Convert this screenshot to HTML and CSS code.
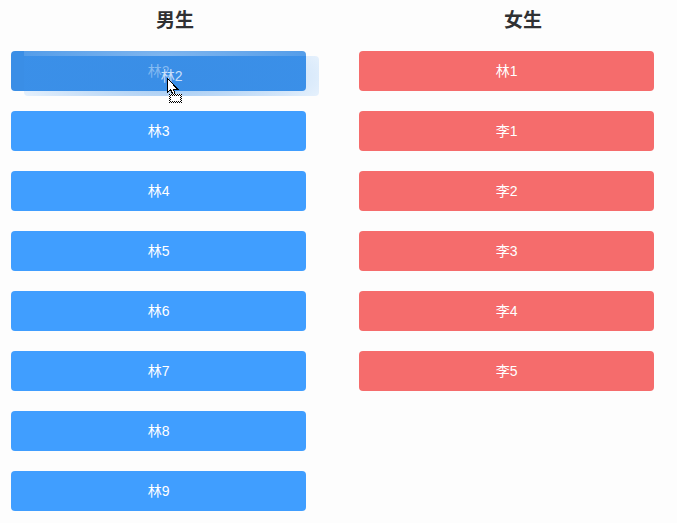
FILE: index.html
```html
<!DOCTYPE html>
<html lang="zh-CN">
<head>
<meta charset="utf-8">
<meta name="viewport" content="width=device-width, initial-scale=1">
<title>男生 / 女生</title>
<link rel="stylesheet" href="styles.css">
</head>
<body>
<main class="board">
  <section class="group">
    <h2 class="title">男生</h2>
    <div class="item-wrap">
      <button class="item boy active" type="button">林2</button>
      <div class="ghost" aria-hidden="true">林2</div>
      <svg class="cursor" viewBox="0 0 16 26" width="16" height="26" shape-rendering="crispEdges" aria-hidden="true">
        <path d="M.5 .5v14l3-3 3 6h2l-2-6h4.500z" fill="#fff" stroke="#000"/>
        <rect x="2" y="16" width="13" height="9" fill="#fff"/>
        <path d="M2 16.500h13M2 24.500h13M2.500 16v9M14.500 16v9" fill="none" stroke="#000" stroke-dasharray="1 1"/>
        <path d="M3 17.500h11M3 23.500h11M3.500 17v7M13.500 17v7" fill="none" stroke="#000" stroke-dasharray="1 1"/>
      </svg>
    </div>
    <button class="item boy" type="button">林3</button>
    <button class="item boy" type="button">林4</button>
    <button class="item boy" type="button">林5</button>
    <button class="item boy" type="button">林6</button>
    <button class="item boy" type="button">林7</button>
    <button class="item boy" type="button">林8</button>
    <button class="item boy" type="button">林9</button>
  </section>
  <section class="group">
    <h2 class="title">女生</h2>
    <button class="item girl" type="button">林1</button>
    <button class="item girl" type="button">李1</button>
    <button class="item girl" type="button">李2</button>
    <button class="item girl" type="button">李3</button>
    <button class="item girl" type="button">李4</button>
    <button class="item girl" type="button">李5</button>
  </section>
</main>
</body>
</html>
```
FILE: styles.css
```css
* {
  box-sizing: border-box;
}

body {
  margin: 0;
  overflow: hidden;
  background: #fdfdfd;
  color: #303133;
  font-family: "Liberation Sans", "Noto Sans CJK SC", sans-serif;
  font-size: 14px;
}

.board {
  display: grid;
  grid-template-columns: 1fr 1fr;
  column-gap: 20px;
  margin: 0 -10px 0 11px;
}

.group {
  display: flex;
  flex-direction: column;
  align-items: flex-start;
  gap: 20px;
  padding-bottom: 12px;
}

.title {
  width: 100%;
  margin: 6px 0 -5px;
  font-size: 19px;
  line-height: 30px;
  font-weight: 700;
  text-align: center;
}

.item,
.item-wrap {
  width: 90%;
  height: 40px;
}

.item {
  padding: 0;
  border: 0;
  border-radius: 4px;
  color: #fff;
  font: inherit;
  line-height: 40px;
  text-align: center;
}

.boy {
  background: #409eff;
}

.girl {
  background: #f56c6c;
}

.item-wrap {
  position: relative;
}

.item-wrap .item {
  width: 100%;
}

.active {
  background: #3a8ee6;
  color: #c4dffa;
}

/* Highlight along the top edge of the item being dragged */
.item-wrap::before {
  content: "";
  position: absolute;
  top: 0;
  left: 13px;
  right: 0;
  height: 5px;
  border-radius: 0 4px 0 0;
  background: radial-gradient(ellipse 150px 24px at 50% 100%, rgba(255, 255, 255, 0.36), rgba(255, 255, 255, 0.12));
}

.ghost {
  position: absolute;
  top: 5px;
  left: 13px;
  width: 100%;
  height: 40px;
  border-radius: 4px;
  background: radial-gradient(ellipse 170px 50px at 50% 50%, rgba(58, 142, 230, 0.54), rgba(64, 158, 255, 0.1));
  color: #c8dffa;
  line-height: 40px;
  text-align: center;
}

.cursor {
  position: absolute;
  top: 27px;
  left: 156px;
}
```
